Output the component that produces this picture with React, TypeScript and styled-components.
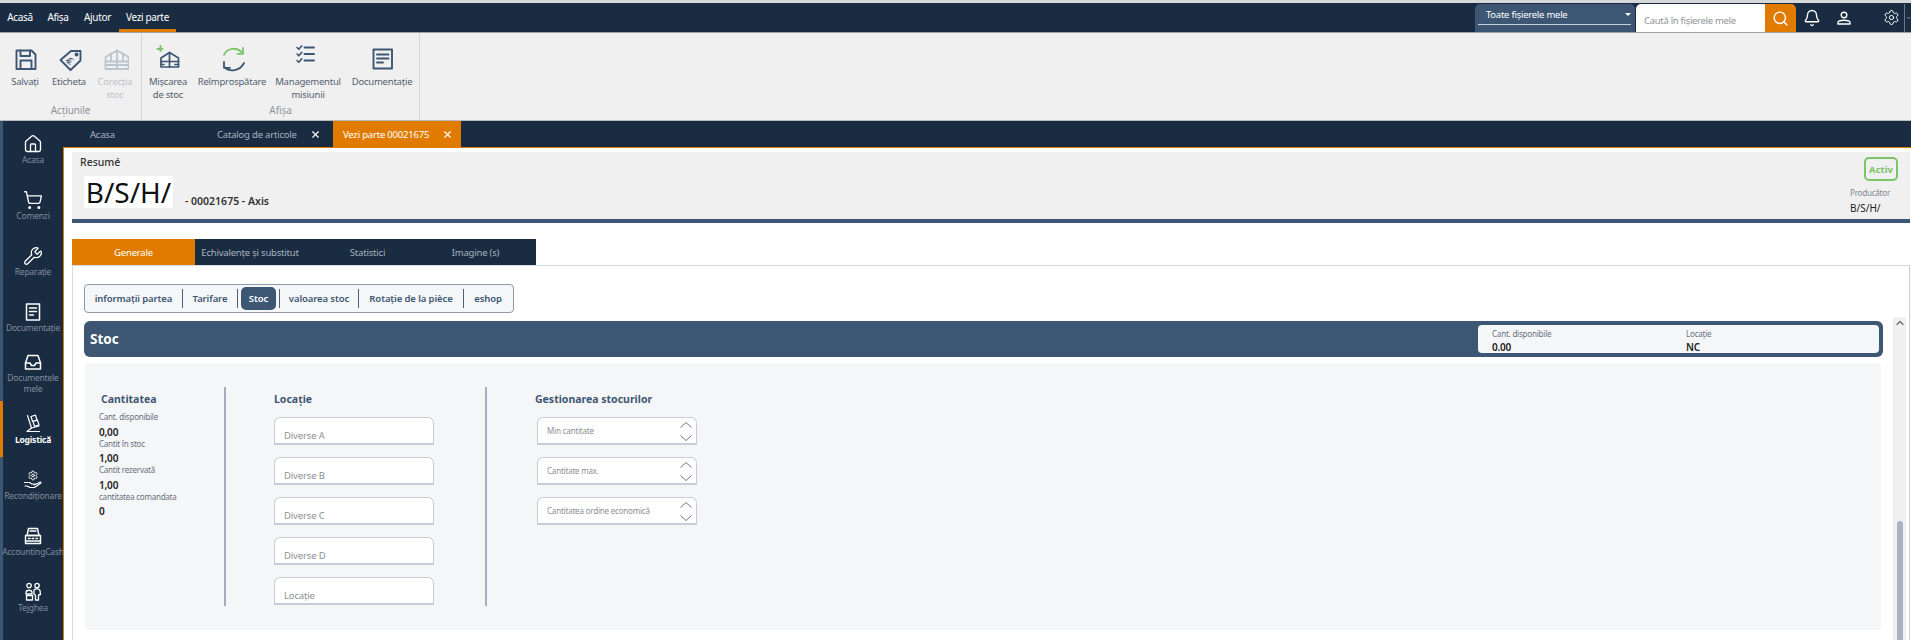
import { ReactNode } from 'react';
import styled, { createGlobalStyle } from 'styled-components';
import { Bell, ChevronDown, ChevronUp, House, Search, Settings, ShoppingCart, Wrench, X } from 'lucide-react';

const NAVY = '#1a2c42';
const STEEL = '#3d5673';
const ORANGE = '#e07b00';
const GREEN = '#7cc36a';
const FONT = '"Noto Sans", "Open Sans", sans-serif';

const GlobalStyle = createGlobalStyle`
    html, body {
        margin: 0;
        padding: 0;
        height: 640px;
        overflow: hidden;
        background: #fff;
    }
    * {
        box-sizing: border-box;
    }
`;

const Page = styled.div`
    width: 1911px;
    height: 640px;
    display: flex;
    flex-direction: column;
    overflow: hidden;
    font-family: ${FONT};
    border-top: 3px solid #d5d7d9;
`;

const Header = styled.header`
    height: 30px;
    flex: none;
    background: ${NAVY};
    border-bottom: 1px solid #9aa3ad;
    display: flex;
    justify-content: space-between;
`;

const Menu = styled.nav`
    display: flex;
    padding-left: 0;
`;

const MenuItem = styled.div<{ $active?: boolean; $width: number }>`
    width: ${p => p.$width}px;
    height: 29px;
    display: flex;
    align-items: center;
    justify-content: center;
    padding-top: 1px;
    color: #fff;
    font-size: 10px;
    letter-spacing: -0.35px;
    border-bottom: 3px solid ${p => (p.$active ? ORANGE : 'transparent')};
`;

const HeaderRight = styled.div`
    display: flex;
    align-items: flex-start;
`;

const ScopeSelect = styled.div`
    width: 160px;
    height: 28px;
    margin-top: 1px;
    padding: 0 4px 0 3px;
    background: ${STEEL};
    border-radius: 5px 5px 0 0;
    color: #fff;
    font-size: 9.5px;
    letter-spacing: -0.25px;
`;

const ScopeValue = styled.div`
    height: 21px;
    padding: 0 0 0 8px;
    display: flex;
    align-items: center;
    justify-content: space-between;
    border-bottom: 1px solid #c7d0da;

    &::after {
        content: '';
        border: 3px solid transparent;
        border-top-color: #fff;
        margin-top: 3px;
    }
`;

const SearchBox = styled.div`
    width: 129px;
    height: 28px;
    margin-top: 1px;
    margin-left: 1px;
    padding: 4px 0 0 8px;
    display: flex;
    align-items: center;
    background: #fff;
    border-radius: 5px 0 0 0;
    color: #8f9398;
    font-size: 9.5px;
    letter-spacing: -0.3px;
`;

const SearchButton = styled.div`
    width: 31px;
    height: 28px;
    margin-top: 1px;
    display: flex;
    align-items: center;
    justify-content: center;
    background: ${ORANGE};
    border-radius: 0 5px 0 0;
    color: #fff;
`;

const HeaderIcon = styled.div<{ $width: number }>`
    width: ${p => p.$width}px;
    height: 29px;
    display: flex;
    align-items: center;
    justify-content: center;
    color: #fff;
`;

const GearSlot = styled.div`
    width: 44px;
    height: 29px;
    padding-left: 18px;
    display: flex;
    align-items: center;
    justify-content: center;
    color: #fff;
`;

const MoreToggle = styled.div`
    width: 7px;
    height: 28px;
    margin-top: 1px;
    padding-left: 1px;
    display: flex;
    align-items: center;
    overflow: hidden;
    border-left: 1px solid #6a7889;
    color: #fff;
`;

const Ribbon = styled.section`
    height: 88px;
    flex: none;
    display: flex;
    background: #f0f0f0;
    border-bottom: 1px solid #b8babc;
`;

const RibbonGroup = styled.div<{ $width: number }>`
    width: ${p => p.$width}px;
    display: flex;
    flex-direction: column;
    border-right: 1px solid #d5d6d7;
`;

const RibbonItems = styled.div<{ $pad: number }>`
    height: 70px;
    padding: 11px 0 0 ${p => p.$pad}px;
    display: flex;
`;

const RibbonItem = styled.div<{ $disabled?: boolean; $width: number }>`
    width: ${p => p.$width}px;
    flex: none;
    display: flex;
    flex-direction: column;
    align-items: center;
    color: ${p => (p.$disabled ? '#bcc3cb' : '#53606f')};
    font-size: 9.5px;
    letter-spacing: -0.22px;
    line-height: 13px;
    text-align: center;
    white-space: pre;

    svg {
        flex: none;
        margin-bottom: 3px;
    }
`;

const GroupLabel = styled.div`
    height: 14px;
    color: #8d949c;
    font-size: 10px;
    letter-spacing: -0.1px;
    line-height: 14px;
    text-align: center;
`;

const Main = styled.div`
    flex: 1;
    min-height: 0;
    display: flex;
`;

const Sidebar = styled.aside`
    width: 63px;
    flex: none;
    background: ${NAVY};
    box-shadow: inset 3px 0 0 ${STEEL};
`;

const SideItem = styled.div<{ $active?: boolean }>`
    height: 56px;
    padding-left: 3px;
    display: flex;
    flex-direction: column;
    align-items: center;
    justify-content: center;
    color: ${p => (p.$active ? '#fff' : '#808d9d')};
    font-size: 8.5px;
    letter-spacing: -0.2px;
    font-weight: ${p => (p.$active ? 700 : 400)};
    line-height: 11px;
    text-align: center;
    white-space: pre;
    box-shadow: ${p => (p.$active ? `inset 3px 0 0 ${ORANGE}` : 'none')};

    svg {
        flex: none;
        color: #fff;
    }
`;

const Workspace = styled.div`
    flex: 1;
    min-width: 0;
    display: flex;
    flex-direction: column;
`;

const TabBar = styled.div`
    height: 27px;
    flex: none;
    display: flex;
    background: ${NAVY};
    border-bottom: 1px solid ${ORANGE};
`;

const DocTab = styled.div<{ $active?: boolean; $width: number; $pad: number }>`
    width: ${p => p.$width}px;
    height: 26px;
    padding-left: ${p => p.$pad}px;
    display: flex;
    align-items: center;
    gap: 13px;
    background: ${p => (p.$active ? ORANGE : 'transparent')};
    color: ${p => (p.$active ? '#fff' : '#a8b2be')};
    font-size: 9.5px;
    letter-spacing: -0.2px;
    white-space: nowrap;

    svg {
        flex: none;
        color: #fff;
    }
`;

const Content = styled.div`
    flex: 1;
    min-height: 0;
    padding: 4px 1px 0 8px;
    display: flex;
    flex-direction: column;
    background: #fff;
    border-left: 1px solid ${ORANGE};
`;

const Summary = styled.div`
    height: 71px;
    flex: none;
    padding: 2px 12px 0 8px;
    display: flex;
    justify-content: space-between;
    background: #f0f0f0;
    border-bottom: 4px solid ${STEEL};
`;

const SummaryTitle = styled.div`
    color: #333;
    font-size: 10.5px;
    font-weight: 500;
    line-height: 16px;
`;

const SummaryLine = styled.div`
    margin: 6px 0 0 4px;
    display: flex;
    align-items: flex-end;
`;

const LogoBox = styled.div`
    width: 89px;
    height: 32px;
    background: #fff;
    color: #111;
    font-size: 28px;
    line-height: 32px;
    text-align: center;
`;

const PartName = styled.div`
    margin: 0 0 0 12px;
    color: #333;
    font-size: 10.5px;
    font-weight: 600;
    line-height: 14px;
`;

const SummarySide = styled.div`
    width: 48px;
    padding-top: 3px;
    display: flex;
    flex-direction: column;
`;

const StatusBadge = styled.div`
    width: 34px;
    height: 24px;
    align-self: flex-end;
    display: flex;
    align-items: center;
    justify-content: center;
    border: 2px solid ${GREEN};
    border-radius: 5px;
    color: ${GREEN};
    font-size: 9.5px;
    font-weight: 700;
`;

const MakerLabel = styled.div`
    margin-top: 6px;
    color: #7d8794;
    font-size: 8px;
    letter-spacing: -0.2px;
    line-height: 12px;
`;

const MakerValue = styled.div`
    margin-top: 2px;
    color: #222;
    font-size: 10px;
    line-height: 14px;
`;

const SectionTabs = styled.div`
    height: 26px;
    flex: none;
    margin-top: 16px;
    display: flex;
`;

const SectionTabRow = styled.div`
    width: 464px;
    display: flex;
    background: ${NAVY};
`;

const SectionTab = styled.div<{ $active?: boolean; $width: number }>`
    width: ${p => p.$width}px;
    display: flex;
    align-items: center;
    justify-content: center;
    background: ${p => (p.$active ? ORANGE : 'transparent')};
    color: ${p => (p.$active ? '#fff' : '#a8b2be')};
    font-size: 9.5px;
    letter-spacing: -0.2px;
    white-space: nowrap;
`;

const TabPanel = styled.div`
    flex: 1;
    min-height: 0;
    padding: 18px 3px 0 11px;
    display: flex;
    flex-direction: column;
    border-top: 1px solid #d4dbe3;
    border-left: 1px solid #d4dbe3;
    border-right: 1px solid #c8ced6;
`;

const SubNav = styled.div`
    width: 430px;
    height: 29px;
    flex: none;
    display: flex;
    align-items: center;
    background: #f5f6f8;
    border: 1px solid #8e9aa9;
    border-radius: 4px;
`;

const SubNavItem = styled.div<{ $width: number; $last?: boolean; $lead?: boolean }>`
    width: ${p => p.$width}px;
    height: 19px;
    display: flex;
    align-items: center;
    justify-content: center;
    color: #3d5673;
    font-size: 9.5px;
    letter-spacing: -0.1px;
    font-weight: 600;
    border-left: ${p => (p.$lead ? '1px solid #4a5f79' : 'none')};
    border-right: ${p => (p.$last ? 'none' : '1px solid #4a5f79')};
`;

const SubNavActive = styled.div`
    width: 35px;
    height: 23px;
    margin: 0 3px;
    display: flex;
    align-items: center;
    justify-content: center;
    background: ${STEEL};
    border-radius: 5px;
    color: #fff;
    font-size: 9.5px;
    letter-spacing: -0.1px;
    font-weight: 600;
`;

const ScrollArea = styled.div`
    flex: 1;
    min-height: 0;
    margin-top: 4px;
    display: flex;
`;

const ScrollContent = styled.div`
    width: 1799px;
    flex: none;
    padding-top: 4px;
`;

const StockBar = styled.div`
    height: 36px;
    padding: 3px 4px 3px 6px;
    display: flex;
    align-items: center;
    justify-content: space-between;
    background: ${STEEL};
    border-radius: 6px;
    color: #fff;
    font-size: 13.5px;
    font-weight: 700;
`;

const StockFacts = styled.div`
    width: 401px;
    height: 28px;
    padding-left: 14px;
    display: flex;
    background: #f5f6f8;
    border-radius: 4px;
`;

const StockFact = styled.div<{ $width: number }>`
    width: ${p => p.$width}px;
`;

const FactLabel = styled.div`
    margin-top: 3px;
    color: #66717f;
    font-size: 8px;
    letter-spacing: -0.2px;
    font-weight: 400;
    line-height: 11px;
`;

const FactValue = styled.div`
    margin-top: 3px;
    color: #222;
    font-size: 10px;
    letter-spacing: -0.2px;
    font-weight: 600;
    line-height: 11px;
`;

const StockBody = styled.div`
    height: 267px;
    margin: 6px 2px 0 1px;
    padding-top: 24px;
    display: flex;
    align-items: flex-start;
    background: #f5f6f8;
    border-radius: 3px;
`;

const Column = styled.div<{ $width: number; $pad: number }>`
    width: ${p => p.$width}px;
    padding-left: ${p => p.$pad}px;
    flex: none;
`;

const Divider = styled.div`
    width: 2px;
    height: 219px;
    flex: none;
    background: #a3afbf;
`;

const ColumnTitle = styled.div<{ $indent?: number }>`
    margin: 3px 0 3px ${p => p.$indent ?? 0}px;
    color: ${STEEL};
    font-size: 10.5px;
    font-weight: 700;
    line-height: 18px;
`;

const QtyLabel = styled.div`
    color: #66717f;
    font-size: 8px;
    letter-spacing: -0.22px;
    line-height: 11px;
`;

const QtyValue = styled.div`
    margin: 4.5px 0 0;
    color: #222;
    font-size: 10px;
    letter-spacing: -0.2px;
    font-weight: 600;
    line-height: 11px;
`;

const FieldStack = styled.div<{ $indent?: number }>`
    margin: 9px 0 0 ${p => p.$indent ?? 0}px;
    display: flex;
    flex-direction: column;
    gap: 12px;
`;

const Field = styled.div`
    width: 160px;
    height: 28px;
    padding: 0 0 0 9px;
    display: flex;
    align-items: flex-end;
    background: #fff;
    border: 1px solid #c6cdd9;
    border-bottom-width: 2px;
    border-radius: 6px 6px 0 0;
    color: #8b8f94;
    font-size: 9.5px;
    letter-spacing: -0.15px;
    line-height: 14px;
`;

const SpinField = styled.div`
    width: 160px;
    height: 28px;
    padding: 0 4px 0 9px;
    display: flex;
    justify-content: space-between;
    background: #fff;
    border: 1px solid #c6cdd9;
    border-bottom-width: 2px;
    border-radius: 6px 6px 0 0;
    color: #8b8f94;
    font-size: 8px;
    letter-spacing: -0.2px;
    line-height: 26px;
`;

const SpinArrows = styled.div`
    height: 25px;
    display: flex;
    flex-direction: column;
    justify-content: space-between;
    padding: 4px 0 2px;
    color: #6c7684;
`;

const ScrollBar = styled.div`
    width: 13px;
    flex: none;
    margin-left: 10px;
    display: flex;
    flex-direction: column;
    align-items: center;
    justify-content: space-between;
    background: #f0f0f0;
    color: #5d6875;
`;

const ScrollThumb = styled.div`
    width: 6px;
    height: 119px;
    background: #a7b3c3;
    border-radius: 3px 3px 0 0;
`;

const Ico = ({ children, size = 28, color = STEEL, width = 1.9 }: { children: ReactNode; size?: number; color?: string; width?: number }) => (
    <svg width={size} height={size} viewBox={`0 0 ${size} ${size}`} fill='none' stroke={color} strokeWidth={width} strokeLinecap='round' strokeLinejoin='round'>
        {children}
    </svg>
);

const SpinChevron = ({ down }: { down?: boolean }) => (
    <svg width='12' height='6' viewBox='0 0 12 6' fill='none' stroke='currentColor' strokeWidth='1'>
        <path d={down ? 'M0.5 0.5L6 5.5L11.5 0.5' : 'M0.5 5.5L6 0.5L11.5 5.5'} />
    </svg>
);

const SaveIcon = () => (
    <Ico>
        <path d='M5.5 6.5H20.5L24.5 10.5V25H5.5Z' />
        <path d='M9.5 6.5V12H19V6.5M9.5 25V16.5H20.5V25' />
    </Ico>
);

const TagIcon = () => (
    <Ico>
        <path d='M5.5 16L16 7H25.5V16.5L15.5 26Z' />
        <circle cx='21.5' cy='10.5' r='1' />
        <path d='M18.5 15.5A3.2 3.2 0 1 0 15 20.5M11.5 16.5L16 16M12 18.5L16 18' strokeWidth={1} />
    </Ico>
);

const WarehouseDisabled = () => (
    <Ico color='#bac5cf' width={1.8}>
        <path d='M4.5 13L16 6.5L27.5 13V25H4.5Z' />
        <path d='M4.5 17.5H27.5M4.5 21H27.5M16 6.5V25M10 9.5V17.5M22 9.5V17.5' />
    </Ico>
);

const WarehouseIcon = () => (
    <Ico width={1.7}>
        <path d='M7 14L15.5 8.5L24.5 14V23H7Z' />
        <path d='M7 17.5H24.5M15.5 8.5V23M7 20.5H10M21 20.5H24.5' />
        <path d='M6.5 2V8M3.5 5H9.5' stroke={GREEN} strokeWidth={2} strokeDasharray='2 1' />
    </Ico>
);

const RefreshIcon = () => (
    <Ico width={1.8}>
        <path d='M6 11C9 3.5 19 2.5 25 9.5M25 4V9.8H19.5' stroke={GREEN} />
        <path d='M26 19C22 27 12 28.5 6 23M6 18V23.8H12' />
    </Ico>
);

const ChecklistIcon = () => (
    <Ico width={1.6}>
        <path d='M3 3.5L4.8 5.3L7.8 1.8M3 10L4.8 11.8L7.8 8.3M3 16.5L4.8 18.3L7.8 14.8' />
        <path d='M10.5 3.5H20M10.5 10H20M10.5 16.5H20' strokeWidth={1.9} />
    </Ico>
);

const DocIcon = () => (
    <Ico>
        <rect x='5.5' y='5.5' width='18.5' height='19' />
        <path d='M9 10.5H20.5M9 14.5H20.5M9 18.5H15' />
    </Ico>
);

const SideDoc = () => (
    <Ico size={20} color='#fff' width={1.5}>
        <rect x='3.5' y='2' width='13' height='16' />
        <path d='M6.5 6H13.5M6.5 9.5H13.5M6.5 13H10.5' />
    </Ico>
);

const SideInbox = () => (
    <Ico size={20} color='#fff' width={1.5}>
        <path d='M5 3.5H15L17.5 11V17H2.5V11Z' />
        <path d='M2.5 11H7L8.5 13.5H11.5L13 11H17.5' />
    </Ico>
);

const SideTruck = () => (
    <Ico size={20} color='#fff' width={1.2}>
        <path d='M4.5 1.5L8.5 14L4 17.5H16.5' />
        <path d='M8 2.5L12.5 1.2L14 6L9.5 7.3ZM10 7.5L14.5 6.2L16 11L11.5 12.3Z' />
        <path d='M8.5 14L16 12' />
    </Ico>
);

const SideRecond = () => (
    <Ico size={20} color='#fff' width={1.2}>
        <Settings x={4.5} y={0} width={11} height={11} strokeWidth={2} />
        <path d='M1.5 12.5H6.5L9 14H12M11 15L17.5 12L18 13L11.5 17.5H7L4 16H2' />
    </Ico>
);

const SideRegister = () => (
    <Ico size={20} color='#fff' width={1.4}>
        <path d='M5.5 2.5H14.5L16 9.5H4Z' />
        <rect x='2.5' y='9.5' width='15' height='8' />
        <path d='M7 5H13M5.5 12.5H7M9.2 12.5H10.8M13 12.5H14.5M2.5 15H17.5' />
    </Ico>
);

const SidePeople = () => (
    <Ico size={20} color='#fff' width={1.3}>
        <circle cx='6' cy='3.5' r='2.2' />
        <circle cx='14' cy='3.5' r='2.2' />
        <path d='M3 10.5C3 7.5 9 7.5 9 10.5V12H3ZM11 8C12 6.5 16 6.5 17 8.5L17.5 12.5L15.5 13V18H12.5V13L11 12.5Z' />
        <rect x='3.5' y='13.5' width='6' height='4.5' />
    </Ico>
);

const UserIcon = () => (
    <Ico size={16} color='#fff' width={1.4}>
        <circle cx='8' cy='5' r='2.8' />
        <path d='M2 14V12.5C2 9.5 14 9.5 14 12.5V14Z' />
    </Ico>
);

const sideItems = [
    { label: 'Acasa', icon: <House size={20} strokeWidth={1.6} /> },
    { label: 'Comenzi', icon: <ShoppingCart size={20} strokeWidth={1.6} /> },
    { label: 'Reparație', icon: <Wrench size={20} strokeWidth={1.5} /> },
    { label: 'Documentație', icon: <SideDoc /> },
    { label: 'Documentele\nmele', icon: <SideInbox /> },
    { label: 'Logistică', icon: <SideTruck />, active: true },
    { label: 'Recondiționare', icon: <SideRecond /> },
    { label: 'AccountingCash', icon: <SideRegister /> },
    { label: 'Tejghea', icon: <SidePeople /> },
];

const quantities = [
    { label: 'Cant. disponibile', value: '0,00' },
    { label: 'Cantit în stoc', value: '1,00' },
    { label: 'Cantit rezervată', value: '1,00' },
    { label: 'cantitatea comandata', value: '0' },
];

const App = () => {
    return (
        <Page>
            <GlobalStyle />
            <Header>
                <Menu>
                    <MenuItem $width={40}>Acasă</MenuItem>
                    <MenuItem $width={36}>Afișa</MenuItem>
                    <MenuItem $width={43}>Ajutor</MenuItem>
                    <MenuItem $width={57} $active>Vezi parte</MenuItem>
                </Menu>
                <HeaderRight>
                    <ScopeSelect>
                        <ScopeValue>Toate fișierele mele</ScopeValue>
                    </ScopeSelect>
                    <SearchBox>Caută în fișierele mele</SearchBox>
                    <SearchButton>
                        <Search size={17} strokeWidth={2} />
                    </SearchButton>
                    <HeaderIcon $width={32}>
                        <Bell size={18} strokeWidth={1.8} />
                    </HeaderIcon>
                    <HeaderIcon $width={32}>
                        <UserIcon />
                    </HeaderIcon>
                    <GearSlot>
                        <Settings size={17} strokeWidth={1.4} />
                    </GearSlot>
                    <MoreToggle>
                        <ChevronDown size={10} strokeWidth={2.5} />
                    </MoreToggle>
                </HeaderRight>
            </Header>

            <Ribbon>
                <RibbonGroup $width={142}>
                    <RibbonItems $pad={3}>
                        <RibbonItem $width={44}>
                            <SaveIcon />
                            Salvați
                        </RibbonItem>
                        <RibbonItem $width={44}>
                            <TagIcon />
                            Eticheta
                        </RibbonItem>
                        <RibbonItem $width={48} $disabled>
                            <WarehouseDisabled />
                            {'Corecția\nstoc'}
                        </RibbonItem>
                    </RibbonItems>
                    <GroupLabel>Acțiunile</GroupLabel>
                </RibbonGroup>
                <RibbonGroup $width={278}>
                    <RibbonItems $pad={6}>
                        <RibbonItem $width={40}>
                            <WarehouseIcon />
                            {'Mișcarea\nde stoc'}
                        </RibbonItem>
                        <RibbonItem $width={88}>
                            <RefreshIcon />
                            Reîmprospătare
                        </RibbonItem>
                        <RibbonItem $width={64}>
                            <ChecklistIcon />
                            {'Managementul\nmisiunii'}
                        </RibbonItem>
                        <RibbonItem $width={84}>
                            <DocIcon />
                            Documentație
                        </RibbonItem>
                    </RibbonItems>
                    <GroupLabel>Afișa</GroupLabel>
                </RibbonGroup>
            </Ribbon>

            <Main>
                <Sidebar>
                    {sideItems.map(item => (
                        <SideItem key={item.label} $active={item.active}>
                            {item.icon}
                            {item.label}
                        </SideItem>
                    ))}
                </Sidebar>
                <Workspace>
                    <TabBar>
                        <DocTab $width={135} $pad={27}>Acasa</DocTab>
                        <DocTab $width={135} $pad={19}>
                            Catalog de articole
                            <X size={11} strokeWidth={2.4} />
                        </DocTab>
                        <DocTab $width={128} $pad={10} $active>
                            Vezi parte 00021675
                            <X size={11} strokeWidth={2.4} />
                        </DocTab>
                    </TabBar>
                    <Content>
                        <Summary>
                            <div>
                                <SummaryTitle>Resumé</SummaryTitle>
                                <SummaryLine>
                                    <LogoBox>B/S/H/</LogoBox>
                                    <PartName>- 00021675 - Axis</PartName>
                                </SummaryLine>
                            </div>
                            <SummarySide>
                                <StatusBadge>Activ</StatusBadge>
                                <MakerLabel>Producător</MakerLabel>
                                <MakerValue>B/S/H/</MakerValue>
                            </SummarySide>
                        </Summary>

                        <SectionTabs>
                            <SectionTabRow>
                                <SectionTab $width={123} $active>Generale</SectionTab>
                                <SectionTab $width={110}>Echivalențe și substitut</SectionTab>
                                <SectionTab $width={125}>Statistici</SectionTab>
                                <SectionTab $width={91}>Imagine (s)</SectionTab>
                            </SectionTabRow>
                        </SectionTabs>

                        <TabPanel>
                            <SubNav>
                                <SubNavItem $width={98}>informații partea</SubNavItem>
                                <SubNavItem $width={55}>Tarifare</SubNavItem>
                                <SubNavActive>Stoc</SubNavActive>
                                <SubNavItem $width={80} $lead>valoarea stoc</SubNavItem>
                                <SubNavItem $width={105}>Rotație de la pièce</SubNavItem>
                                <SubNavItem $width={48} $last>eshop</SubNavItem>
                            </SubNav>
                            <ScrollArea>
                                <ScrollContent>
                                    <StockBar>
                                        Stoc
                                        <StockFacts>
                                            <StockFact $width={194}>
                                                <FactLabel>Cant. disponibile</FactLabel>
                                                <FactValue>0.00</FactValue>
                                            </StockFact>
                                            <StockFact $width={190}>
                                                <FactLabel>Locație</FactLabel>
                                                <FactValue>NC</FactValue>
                                            </StockFact>
                                        </StockFacts>
                                    </StockBar>
                                    <StockBody>
                                        <Column $width={139} $pad={14}>
                                            <ColumnTitle $indent={2}>Cantitatea</ColumnTitle>
                                            {quantities.map(q => (
                                                <div key={q.label}>
                                                    <QtyLabel>{q.label}</QtyLabel>
                                                    <QtyValue>{q.value}</QtyValue>
                                                </div>
                                            ))}
                                        </Column>
                                        <Divider />
                                        <Column $width={259} $pad={48}>
                                            <ColumnTitle>Locație</ColumnTitle>
                                            <FieldStack>
                                                <Field>Diverse A</Field>
                                                <Field>Diverse B</Field>
                                                <Field>Diverse C</Field>
                                                <Field>Diverse D</Field>
                                                <Field>Locație</Field>
                                            </FieldStack>
                                        </Column>
                                        <Divider />
                                        <Column $width={300} $pad={48}>
                                            <ColumnTitle>Gestionarea stocurilor</ColumnTitle>
                                            <FieldStack $indent={2}>
                                                {['Min cantitate', 'Cantitate max.', 'Cantitatea ordine economică'].map(label => (
                                                    <SpinField key={label}>
                                                        {label}
                                                        <SpinArrows>
                                                            <SpinChevron />
                                                            <SpinChevron down />
                                                        </SpinArrows>
                                                    </SpinField>
                                                ))}
                                            </FieldStack>
                                        </Column>
                                    </StockBody>
                                </ScrollContent>
                                <ScrollBar>
                                    <ChevronUp size={12} strokeWidth={2.4} />
                                    <ScrollThumb />
                                </ScrollBar>
                            </ScrollArea>
                        </TabPanel>
                    </Content>
                </Workspace>
            </Main>
        </Page>
    );
};

export default App;
